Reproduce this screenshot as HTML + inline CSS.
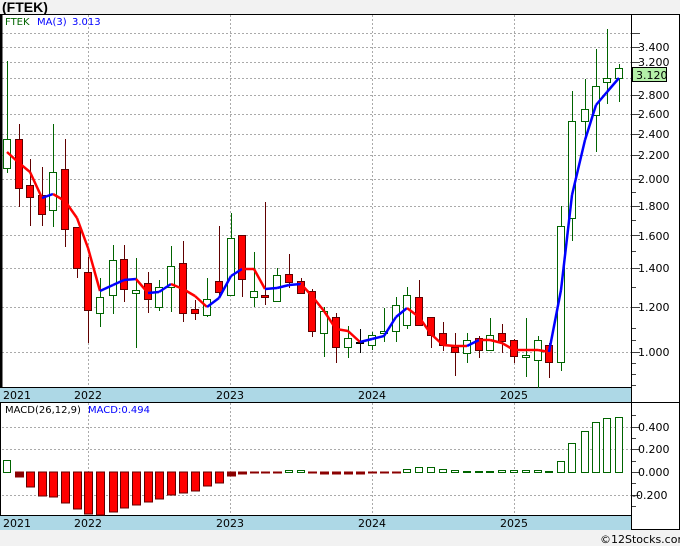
<!DOCTYPE html>
<html><head><meta charset="utf-8">
<style>
html,body{margin:0;padding:0;background:#f2f2f2;}
body{width:680px;height:546px;overflow:hidden;font-family:"Liberation Sans","DejaVu Sans",sans-serif;}
svg{display:block;}
svg text{font-family:"DejaVu Sans","Liberation Sans",sans-serif;}
</style></head>
<body>
<svg id="s" width="680" height="546" xmlns="http://www.w3.org/2000/svg" shape-rendering="crispEdges">
<rect x="0" y="0" width="680" height="546" fill="#f2f2f2"/>
<text x="2" y="12" font-size="14" font-weight="bold" fill="#000" style="font-family:'Liberation Sans',sans-serif">(FTEK)</text>
<rect x="0.5" y="14.5" width="679" height="515" fill="#fff" stroke="#000"/>
<g id="grid" stroke="#aaa" stroke-dasharray="2,2" stroke-width="1"></g>
<rect x="0" y="387" width="632" height="15" fill="#add8e6"/>
<rect x="0" y="515" width="632" height="15" fill="#add8e6"/>
<line x1="0" y1="387.5" x2="632" y2="387.5" stroke="#000"/>
<line x1="0" y1="402.5" x2="680" y2="402.5" stroke="#000"/>
<line x1="0" y1="515.5" x2="632" y2="515.5" stroke="#000"/>
<line x1="631.5" y1="14" x2="631.5" y2="530" stroke="#000"/>
<line x1="1.5" y1="14" x2="1.5" y2="387" stroke="#000" stroke-width="2"/>
<g id="ticks" stroke="#444"></g>
<g id="c"></g>
<g id="ma" stroke-width="2.5" fill="none" shape-rendering="auto"></g>
<g id="m"></g>
<g font-size="11" fill="#000">
<text x="3" y="399">2021</text><text x="74" y="399">2022</text><text x="216" y="399">2023</text><text x="358" y="399">2024</text><text x="500" y="399">2025</text>
<text x="3" y="527">2021</text><text x="74" y="527">2022</text><text x="216" y="527">2023</text><text x="358" y="527">2024</text><text x="500" y="527">2025</text>
<text x="638" y="51">3.400</text><text x="638" y="66">3.200</text><text x="638" y="99">2.800</text><text x="638" y="118">2.600</text><text x="638" y="138">2.400</text><text x="638" y="159">2.200</text><text x="638" y="183">2.000</text><text x="638" y="210">1.800</text><text x="638" y="240">1.600</text><text x="638" y="272">1.400</text><text x="638" y="311">1.200</text><text x="638" y="356">1.000</text>
<text x="638" y="431">0.400</text><text x="638" y="453">0.200</text><text x="638" y="476">0.000</text><text x="632" y="499">-0.200</text>
</g>
<rect x="632.5" y="67.5" width="34" height="14" fill="#b4f0a8" stroke="#000"/>
<text x="636" y="79" font-size="11" fill="#000">3.120</text>
<text x="5" y="25" font-size="10" fill="#006400">FTEK</text>
<text x="37" y="25" font-size="10" fill="#0000ff">MA(3)</text>
<text x="72" y="25" font-size="10" fill="#0000ff">3.013</text>
<text x="5" y="413" font-size="10" fill="#000">MACD(26,12,9)</text>
<text x="88" y="413" font-size="10" fill="#0000ff">MACD:0.494</text>
<text x="600" y="543" font-size="11" fill="#000">©12Stocks.com</text>
</svg>
<script>
var NS="http://www.w3.org/2000/svg";
function el(p,t,a){var e=document.createElementNS(NS,t);for(var k in a)e.setAttribute(k,a[k]);document.getElementById(p).appendChild(e);return e;}
[33,47,62,78,95,114,134,155,179,206,235,268,307,352].forEach(function(y){el('grid','line',{x1:2,x2:631,y1:y+.5,y2:y+.5});});
[427,449,495].forEach(function(y){el('grid','line',{x1:2,x2:631,y1:y+.5,y2:y+.5});});
[88,230,372,514].forEach(function(x){el('grid','line',{x1:x+.5,x2:x+.5,y1:15,y2:387});el('grid','line',{x1:x+.5,x2:x+.5,y1:403,y2:515});});
[33,47,62,78,95,114,134,155,179,206,235,268,307,352].forEach(function(y){el('ticks','line',{x1:632,x2:640,y1:y+.5,y2:y+.5});});
[192,220,251,287,328,340,363,374,385].forEach(function(y){el('ticks','line',{x1:632,x2:636,y1:y+.5,y2:y+.5});});
[427,449,472,495].forEach(function(y){el('ticks','line',{x1:632,x2:640,y1:y+.5,y2:y+.5});});
[415,438,461,483,506].forEach(function(y){el('ticks','line',{x1:632,x2:636,y1:y+.5,y2:y+.5});});
var C=[[7,61,139,168,173,'u'],[19,124,139,188,207,'d'],[30,159,185,197,226,'d'],[42,167,195,214,226,'d'],[53,124,172,210,227,'u'],[65,139,169,229,247,'d'],[77,227,227,268,278,'d'],[88,257,272,310,343,'d'],[100,278,297,313,327,'u'],[113,245,260,295,314,'u'],[124,245,259,289,302,'d'],[136,258,290,293,348,'u'],[148,272,283,299,313,'d'],[159,280,287,307,311,'u'],[171,246,266,287,312,'u'],[183,241,263,313,322,'d'],[195,300,309,313,320,'d'],[207,278,299,315,317,'u'],[219,226,281,292,295,'d'],[231,213,238,295,296,'u'],[242,235,235,279,297,'d'],[254,252,291,297,307,'u'],[265,202,295,297,305,'d'],[277,268,275,301,302,'u'],[289,254,274,282,288,'d'],[301,278,281,293,294,'d'],[312,289,291,331,337,'d'],[324,307,311,333,357,'u'],[336,313,317,347,363,'d'],[348,326,338,347,358,'u'],[360,329,342,343,353,'k'],[372,332,335,345,350,'u'],[384,308,331,333,342,'u'],[396,297,305,331,342,'u'],[407,287,295,325,329,'u'],[419,280,297,325,325,'d'],[431,317,317,335,348,'d'],[443,322,333,345,351,'d'],[455,333,347,352,376,'d'],[467,333,340,353,363,'u'],[479,336,338,350,358,'d'],[490,318,335,350,351,'u'],[502,324,333,341,353,'d'],[514,339,340,356,363,'d'],[526,318,355,357,377,'u'],[538,336,340,360,388,'u'],[549,343,345,362,378,'d'],[561,206,226,362,371,'u'],[572,91,121,218,241,'u'],[585,79,109,121,137,'u'],[596,49,86,115,152,'u'],[607,29,78,82,104,'u'],[619,64,68,78,102,'u']];
C.forEach(function(c){var x=c[0];var col=c[5]=='u'?'#006400':(c[5]=='d'?'#600000':'#000');
el('c','line',{x1:x+.5,x2:x+.5,y1:c[1],y2:c[4],stroke:col});
var h=Math.max(1,c[3]-c[2]);
el('c','rect',{x:x-3.5,y:c[2]+.5,width:7,height:h,fill:c[5]=='d'?'#ff0000':'#fff',stroke:c[5]=='d'?'#600000':col});});
var M=[[7,152],[19,163],[30,172],[42,198],[53,194],[65,201],[77,218],[88,248],[100,291],[113,285],[124,280],[136,279],[148,293],[159,292],[171,284],[183,289],[195,296],[207,307],[219,298],[231,276],[242,269],[254,269],[265,289],[277,288],[289,285],[301,284],[312,296],[324,311],[336,329],[348,331],[360,342],[372,339],[384,336],[396,317],[407,308],[419,317],[431,334],[443,345],[455,346],[467,346],[479,340],[490,340],[502,343],[514,350],[526,350],[538,350],[549,352],[561,290],[572,195],[585,140],[596,105],[607,92],[619,78]];
for(var i=1;i<M.length;i++){el('ma','line',{x1:M[i-1][0],y1:M[i-1][1],x2:M[i][0],y2:M[i][1],stroke:M[i][1]<M[i-1][1]?'#0000ff':'#ff0000'});}
var B=[[7,460],[19,477],[30,487],[42,496],[53,497],[65,503],[77,509],[88,514],[100,515],[113,512],[124,508],[136,505],[148,502],[159,499],[171,495],[183,493],[195,491],[207,486],[219,483],[231,476],[242,474],[254,473],[265,473],[277,473],[289,470],[301,470],[312,473],[324,474],[336,474],[348,474],[360,474],[372,473],[384,473],[396,473],[407,469],[419,467],[431,467],[443,469],[455,470],[467,471],[479,471],[490,471],[502,470],[514,470],[526,470],[538,470],[549,471],[561,461],[572,443],[585,431],[596,422],[607,418],[619,417]];
B.forEach(function(b){var x=b[0],y=b[1];
if(y<472){el('m','rect',{x:x-3.5,y:y+.5,width:7,height:472-y,fill:'#fff',stroke:'#006400'});}
else{var big=y>478;el('m','rect',{x:x-3.5,y:472,width:8,height:y-472,fill:big?'#ff0000':'#8b0000',stroke:big?'#600000':'#8b0000'});}});
</script>
</body></html>
